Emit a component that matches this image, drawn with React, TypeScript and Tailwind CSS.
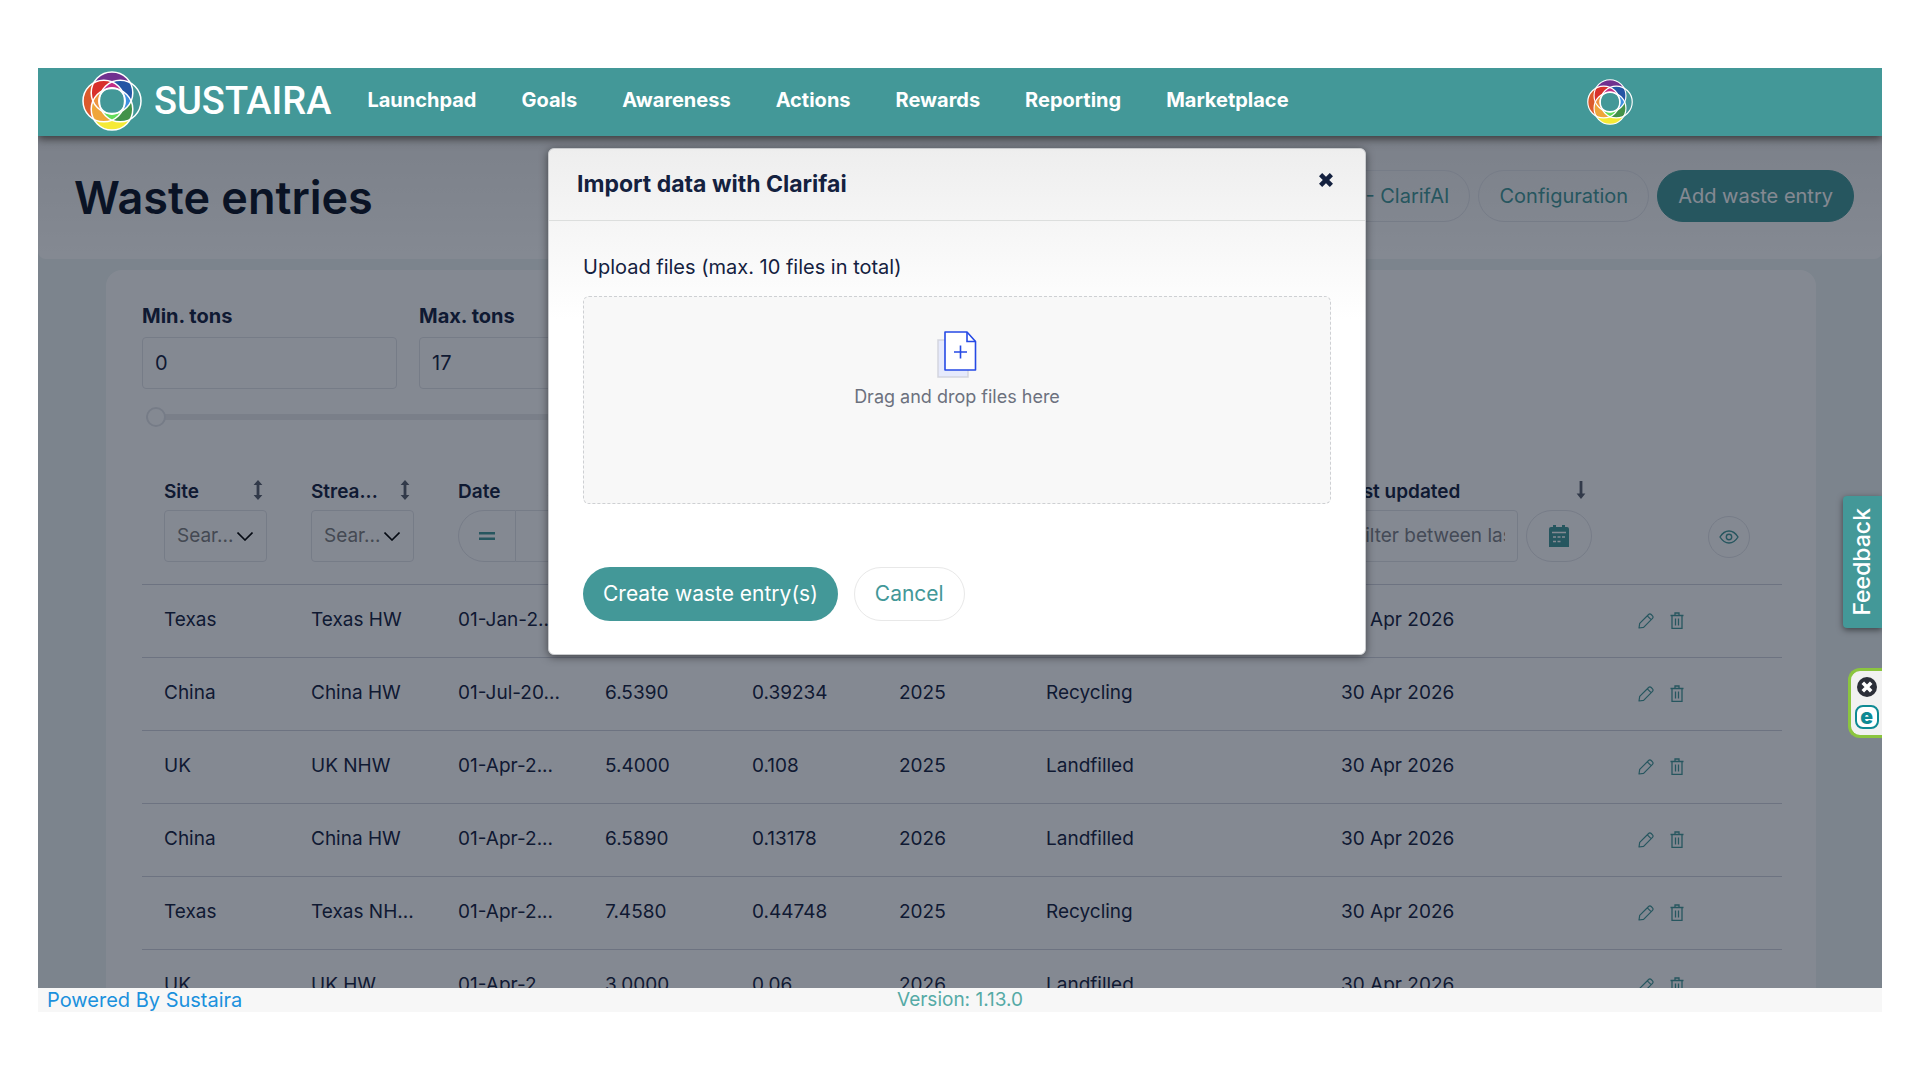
import { useState, type FormEvent } from "react";
import { clsx } from "clsx";

const NAV_ITEMS = ["Launchpad", "Goals", "Awareness", "Actions", "Rewards", "Reporting", "Marketplace"];

type WasteEntry = {
  site: string;
  stream: string;
  date: string;
  tons: string;
  emissions: string;
  year: string;
  treatment: string;
  updated: string;
};

const ENTRIES: WasteEntry[] = [
  { site: "Texas", stream: "Texas HW", date: "01-Jan-2...", tons: "", emissions: "", year: "", treatment: "", updated: "30 Apr 2026" },
  { site: "China", stream: "China HW", date: "01-Jul-20...", tons: "6.5390", emissions: "0.39234", year: "2025", treatment: "Recycling", updated: "30 Apr 2026" },
  { site: "UK", stream: "UK NHW", date: "01-Apr-2...", tons: "5.4000", emissions: "0.108", year: "2025", treatment: "Landfilled", updated: "30 Apr 2026" },
  { site: "China", stream: "China HW", date: "01-Apr-2...", tons: "6.5890", emissions: "0.13178", year: "2026", treatment: "Landfilled", updated: "30 Apr 2026" },
  { site: "Texas", stream: "Texas NH...", date: "01-Apr-2...", tons: "7.4580", emissions: "0.44748", year: "2025", treatment: "Recycling", updated: "30 Apr 2026" },
  { site: "UK", stream: "UK HW", date: "01-Apr-2...", tons: "3.0000", emissions: "0.06", year: "2026", treatment: "Landfilled", updated: "30 Apr 2026" },
];

// Four overlapping circles; every overlap gets its own colour.
function LogoMark({ id, className }: { id: string; className?: string }) {
  const u = `url(#${id}-u)`;
  const d = `url(#${id}-d)`;
  const l = `url(#${id}-l)`;
  const r = `url(#${id}-r)`;
  return (
    <svg viewBox="0 0 60 60" className={className} aria-hidden="true">
      <defs>
        <clipPath id={`${id}-u`}><circle cx="30" cy="21.8" r="20.8" /></clipPath>
        <clipPath id={`${id}-d`}><circle cx="30" cy="38.2" r="20.8" /></clipPath>
        <clipPath id={`${id}-l`}><circle cx="21.8" cy="30" r="20.8" /></clipPath>
        <clipPath id={`${id}-r`}><circle cx="38.2" cy="30" r="20.8" /></clipPath>
      </defs>
      <circle cx="30" cy="21.8" r="20.8" fill="#70308f" />
      <circle cx="30" cy="38.2" r="20.8" fill="#f5ea35" />
      <circle cx="21.8" cy="30" r="20.8" fill="#dc5a2b" />
      <g clipPath={l}>
        <circle cx="30" cy="38.2" r="20.8" fill="#efa63a" />
        <circle cx="30" cy="21.8" r="20.8" fill="#d8302b" />
      </g>
      <g clipPath={r}>
        <circle cx="30" cy="38.2" r="20.8" fill="#43924a" />
        <circle cx="30" cy="21.8" r="20.8" fill="#2355a4" />
      </g>
      <g clipPath={u}>
        <g clipPath={d}>
          <circle cx="21.8" cy="30" r="20.8" fill="#ee9440" />
          <g clipPath={r}>
            <circle cx="38.2" cy="30" r="20.8" fill="#3f8fdf" />
          </g>
        </g>
      </g>
      <g clipPath={l}>
        <g clipPath={r}>
          <circle cx="30" cy="21.8" r="20.8" fill="#c22d86" />
          <circle cx="30" cy="38.2" r="20.8" fill="#63dd5a" />
          <g clipPath={u}>
            <circle cx="30" cy="38.2" r="20.8" fill="#439898" />
          </g>
        </g>
      </g>
      <circle cx="30" cy="30" r="13" fill="#439898" />
      <g fill="none" stroke="#fff" strokeWidth="1.5">
        <circle cx="30" cy="21.8" r="20.8" />
        <circle cx="30" cy="38.2" r="20.8" />
        <circle cx="21.8" cy="30" r="20.8" />
        <circle cx="38.2" cy="30" r="20.8" />
        <circle cx="30" cy="30" r="13.2" />
      </g>
    </svg>
  );
}

function SortIcon({ down }: { down?: boolean }) {
  return (
    <svg viewBox="0 0 10 20" className="mb-1 h-5 w-2.5 shrink-0 fill-[#5a606e]" aria-hidden="true">
      <path d={down ? "M3.6 1h2.8v12.5H9.4L5 19 .6 13.5h3z" : "M5 0l4.4 5H6.4v10h3L5 20 .6 15h3V5H.6z"} />
    </svg>
  );
}

function PencilIcon() {
  return (
    <svg viewBox="0 0 16 16" className="size-4" fill="none" stroke="currentColor" strokeWidth="1.2" strokeLinejoin="round" aria-hidden="true">
      <path d="M1 15l.7-4.6 8.9-8.9a1.8 1.8 0 0 1 2.6 0l1.3 1.3a1.8 1.8 0 0 1 0 2.6l-8.9 8.9zM9.3 2.9l3.8 3.8" />
    </svg>
  );
}

function TrashIcon() {
  return (
    <svg viewBox="0 0 14 17" className="h-[17px] w-3.5" fill="none" stroke="currentColor" strokeWidth="1.3" aria-hidden="true">
      <path d="M.5 3.5h13M2 3.5v12.8h10V3.5M5 3.3V1h4v2.3M5.5 6.5v7M8.5 6.5v7" />
    </svg>
  );
}

function CalendarIcon() {
  return (
    <svg viewBox="0 0 20 22" className="h-[22px] w-5" aria-hidden="true">
      <path fill="currentColor" d="M2 2h2V0h3v2h6V0h3v2h2a2 2 0 0 1 2 2v18H0V4a2 2 0 0 1 2-2z" />
      <path stroke="#fff" strokeWidth="1.5" d="M3 7.5h14M4 12h3M8.5 12h3M13 12h3M4 16.5h3M8.5 16.5h3" />
    </svg>
  );
}

function EyeIcon() {
  return (
    <svg viewBox="0 0 20 14" className="h-3.5 w-5" fill="none" stroke="currentColor" strokeWidth="1.4" aria-hidden="true">
      <path d="M1 7c2.5-4 5.5-6 9-6s6.5 2 9 6c-2.5 4-5.5 6-9 6S3.5 11 1 7z" />
      <circle cx="10" cy="7" r="2.7" />
    </svg>
  );
}

function FilterSelect({ label }: { label: string }) {
  return (
    <div className="relative h-[52px]">
      <select
        aria-label={label}
        className="h-full w-full appearance-none rounded-sm border border-[#e3e4e9] bg-transparent pl-3 font-normal text-[#7f7f80]"
      >
        <option>Sear...</option>
      </select>
      <svg viewBox="0 0 16 9" className="pointer-events-none absolute top-[22px] right-3.5 h-[9px] w-4" fill="none" stroke="#000" strokeWidth="1.6" aria-hidden="true">
        <path d="M.5.5L8 8 15.5.5" />
      </svg>
    </div>
  );
}

function TopBar() {
  return (
    <header className="relative z-20 flex h-[68px] shrink-0 items-center bg-[#439898] pl-11 text-white shadow-[0_3px_8px_rgba(40,40,40,0.8)]">
      <a href="#" className="flex items-center gap-3 pb-0.5">
        <LogoMark id="brand" className="size-[60px]" />
        <span className="font-[Roboto,sans-serif] text-[38px] leading-none font-medium">SUSTAIRA</span>
      </a>
      <nav className="ml-9 flex gap-[45px] pb-1 font-bold">
        {NAV_ITEMS.map((item) => (
          <a key={item} href="#">
            {item}
          </a>
        ))}
      </nav>
      <button type="button" aria-label="Account" className="mr-[249px] ml-auto">
        <LogoMark id="avatar" className="size-[46px]" />
      </button>
    </header>
  );
}

function Filters() {
  const [min, setMin] = useState("0");
  const [max, setMax] = useState("17");

  return (
    <div>
      <div className="flex gap-[22px]">
        <div className="w-[255px]">
          <label htmlFor="min" className="block leading-7 font-bold">
            Min. tons
          </label>
          <input
            id="min"
            value={min}
            onChange={(e) => setMin(e.target.value)}
            className="mt-[7px] h-[52px] w-full rounded-sm border border-[#e3e4e9] px-3"
          />
        </div>
        <div className="w-[255px]">
          <label htmlFor="max" className="block leading-7 font-bold">
            Max. tons
          </label>
          <input
            id="max"
            value={max}
            onChange={(e) => setMax(e.target.value)}
            className="mt-[7px] h-[52px] w-full rounded-sm border border-[#e3e4e9] px-3"
          />
        </div>
      </div>
      <input
        type="range"
        aria-label="Tons"
        min={0}
        max={17}
        defaultValue={0}
        className="mt-[25px] ml-1 block h-1.5 w-[520px] appearance-none rounded-full bg-[#eaeaec] [&::-webkit-slider-thumb]:size-5 [&::-webkit-slider-thumb]:appearance-none [&::-webkit-slider-thumb]:rounded-full [&::-webkit-slider-thumb]:border-2 [&::-webkit-slider-thumb]:border-[#e3e4e9] [&::-webkit-slider-thumb]:bg-white"
      />
    </div>
  );
}

function EntriesTable() {
  return (
    <table className="mt-[54px] w-full table-fixed text-left text-[19px]">
      <colgroup>
        <col className="w-[147px]" />
        <col className="w-[147px]" />
        <col className="w-[147px]" />
        <col className="w-[147px]" />
        <col className="w-[147px]" />
        <col className="w-[147px]" />
        <col className="w-[295px]" />
        <col className="w-[295px]" />
        <col />
      </colgroup>
      <thead>
        <tr className="h-[110px] border-b border-[#d0d2dc] align-top">
          <th className="px-[22px] font-semibold">
            <div className="flex h-9 items-center justify-between pr-1">
              Site <SortIcon />
            </div>
            <FilterSelect label="Filter by site" />
          </th>
          <th className="px-[22px] font-semibold">
            <div className="flex h-9 items-center justify-between pr-1">
              Strea... <SortIcon />
            </div>
            <FilterSelect label="Filter by stream" />
          </th>
          <th className="px-[22px] font-semibold">
            <div className="flex h-9 items-center justify-between pr-1">
              Date <SortIcon />
            </div>
            <div className="flex h-[52px]">
              <button type="button" className="w-[58px] shrink-0 rounded-l-full border border-[#e3e4e9] text-[#439898]" aria-label="Equals">
                <svg viewBox="0 0 16 8" className="mx-auto h-2 w-4 fill-current" aria-hidden="true">
                  <path d="M0 0h16v2.5H0zM0 5.5h16V8H0z" />
                </svg>
              </button>
              <input aria-label="Filter by date" className="w-full min-w-0 border border-l-0 border-[#e3e4e9]" />
            </div>
          </th>
          <th />
          <th />
          <th />
          <th />
          <th className="px-[22px] font-semibold">
            <div className="flex h-9 items-center justify-between pr-1.5">
              Last updated <SortIcon down />
            </div>
            <div className="flex h-[52px] gap-2">
              <input
                aria-label="Filter by last updated"
                placeholder="Filter between last updated"
                className="w-[177px] rounded-sm border border-[#e3e4e9] px-3 font-normal placeholder:text-[#7f8187]"
              />
              <button type="button" aria-label="Pick dates" className="flex w-[66px] items-center justify-center rounded-full border border-[#e3e4e9] text-[#439898]">
                <CalendarIcon />
              </button>
            </div>
          </th>
          <th>
            <button type="button" aria-label="Columns" className="mt-[42px] ml-[94px] flex size-[42px] items-center justify-center rounded-full border border-[#e3e4e9] text-[#439898]">
              <EyeIcon />
            </button>
          </th>
        </tr>
      </thead>
      <tbody>
        {ENTRIES.map((entry, i) => (
          <tr key={i} className="h-[73px] border-b border-[#d0d2dc]">
            <td className="pl-[22px] whitespace-nowrap">{entry.site}</td>
            <td className="pl-[22px] whitespace-nowrap">{entry.stream}</td>
            <td className="pl-[22px] whitespace-nowrap">{entry.date}</td>
            <td className="pl-[22px]">{entry.tons}</td>
            <td className="pl-[22px]">{entry.emissions}</td>
            <td className="pl-[22px]">{entry.year}</td>
            <td className="pl-[22px]">{entry.treatment}</td>
            <td className="pl-[22px]">{entry.updated}</td>
            <td className="pl-6 text-[#439898]">
              <div className="flex items-center gap-4">
                <button type="button" aria-label="Edit">
                  <PencilIcon />
                </button>
                <button type="button" aria-label="Delete">
                  <TrashIcon />
                </button>
              </div>
            </td>
          </tr>
        ))}
      </tbody>
    </table>
  );
}

function PillButton({ children, primary }: { children: string; primary?: boolean }) {
  return (
    <button
      type="button"
      className={clsx(
        "h-[52px] rounded-full border px-5",
        primary ? "border-[#439898] bg-[#439898] text-white" : "border-[#e3e4e9] text-[#439898]",
      )}
    >
      {children}
    </button>
  );
}

function ImportDialog({ onClose }: { onClose: () => void }) {
  function handleSubmit(event: FormEvent<HTMLFormElement>) {
    event.preventDefault();
    onClose();
  }

  return (
    <form
      role="dialog"
      aria-labelledby="import-title"
      onSubmit={handleSubmit}
      className="w-[818px] rounded-md border border-[#c9cbce] bg-white bg-linear-to-b from-[#eeeeee] to-white to-[170px] shadow-[0_2px_8px_rgba(0,0,0,0.5)]"
    >
      <div className="flex h-[72px] items-center justify-between border-b border-[#dcdedd] pr-8 pl-7">
        <h2 id="import-title" className="text-[23px] font-bold">
          Import data with Clarifai
        </h2>
        <button type="button" aria-label="Close" onClick={onClose} className="mb-2.5">
          <svg viewBox="0 0 14 14" className="size-3.5" stroke="currentColor" strokeWidth="4.5" aria-hidden="true">
            <path d="M1.6 1.6l10.8 10.8M12.4 1.6L1.6 12.4" />
          </svg>
        </button>
      </div>
      <div className="px-[34px] pt-8 pb-[33px]">
        <label htmlFor="files" className="block leading-7">
          Upload files (max. 10 files in total)
        </label>
        <label
          htmlFor="files"
          className="mt-[15px] flex h-[208px] flex-col items-center rounded-md border border-dashed border-[#ced0d3] bg-[#f8f8f8] pt-[34px] text-lg leading-7 text-[#6c717e]"
        >
          <svg viewBox="0 0 40 48" className="h-12 w-10" fill="none" aria-hidden="true">
            <path d="M1 9h30v37H1z" fill="#e6eafc" stroke="#d3d5de" strokeWidth="1.5" />
            <path d="M8 1h22l8.5 9.5V39H8z" fill="#fff" stroke="#264ae5" strokeWidth="1.6" strokeLinejoin="round" />
            <path d="M30 1v9.5h8.5M17 21h13M23.5 14.5v13" stroke="#264ae5" strokeWidth="1.6" />
          </svg>
          <span className="mt-1">Drag and drop files here</span>
          <input id="files" type="file" multiple className="sr-only" />
        </label>
        <div className="mt-[63px] flex gap-4 text-[21px]">
          <button type="submit" className="h-[54px] rounded-full bg-[#439898] px-5 text-white">
            Create waste entry(s)
          </button>
          <button type="button" onClick={onClose} className="h-[54px] rounded-full border border-[#e8e8e8] bg-white px-5 text-[#439898]">
            Cancel
          </button>
        </div>
      </div>
    </form>
  );
}

export default function App() {
  const [open, setOpen] = useState(true);

  return (
    <div className="flex h-screen bg-white px-[38px] py-[68px] font-[Inter,sans-serif] text-xl text-[#14213f]">
      <div className="relative flex min-w-0 flex-1 flex-col overflow-hidden">
        <TopBar />

        <main className="relative min-h-0 flex-1 overflow-hidden bg-[#eef5f4]">
          <div className="flex h-[123px] items-start justify-between rounded-b-lg bg-linear-to-b from-[#eeeeee] to-white pt-[34px] pr-7 pl-9">
            <h1 className="text-[45px] leading-[56px] font-semibold text-[#0a1325]">Waste entries</h1>
            <div className="flex gap-2">
              <PillButton>Import data - ClarifAI</PillButton>
              <PillButton>Configuration</PillButton>
              <PillButton primary>Add waste entry</PillButton>
            </div>
          </div>
          <section className="mt-[11px] mr-[66px] ml-[68px] rounded-t-2xl bg-white pt-8 pr-[34px] pl-9">
            <Filters />
            <EntriesTable />
          </section>
        </main>

        <footer className="relative z-20 grid h-6 shrink-0 grid-cols-3 items-center bg-[#f7f7f7] leading-6">
          <a href="#" className="pl-[9px] text-[#1b91dd]">
            Powered By Sustaira
          </a>
          <p className="text-center text-[19px] text-[#55aaa6]">Version: 1.13.0</p>
        </footer>

        {open && (
          <div className="absolute inset-x-0 top-[68px] bottom-6 z-10 flex items-start justify-center bg-[#0a1325]/50 pt-3 pr-1.5">
            <ImportDialog onClose={() => setOpen(false)} />
          </div>
        )}

        <button
          type="button"
          className="absolute top-[428px] right-0 z-30 flex h-[132px] w-[39px] items-center justify-center rounded-l-sm bg-[#439898] text-[23px] font-medium text-white shadow-[0_2px_6px_rgba(0,0,0,0.5)]"
        >
          <span className="rotate-180 [writing-mode:vertical-rl]">Feedback</span>
        </button>

        <div className="absolute top-[600px] right-0 z-30 flex h-[70px] w-[34px] flex-col items-center justify-center gap-2 rounded-l-xl border-[3px] border-r-0 border-[#8bc53f] bg-[#f1f1f1]">
          <button type="button" aria-label="Dismiss">
            <svg viewBox="0 0 20 20" className="size-5" aria-hidden="true">
              <circle cx="10" cy="10" r="10" fill="#2b2e38" />
              <path d="M5.8 5.8l8.4 8.4M14.2 5.8l-8.4 8.4" stroke="#fff" strokeWidth="3.6" />
            </svg>
          </button>
          <button
            type="button"
            className="flex size-6 items-center justify-center rounded-lg border-2 border-[#0e8a94] bg-white pb-0.5 text-[21px] leading-none font-black text-[#0e8a94]"
          >
            e
          </button>
        </div>
      </div>
    </div>
  );
}
